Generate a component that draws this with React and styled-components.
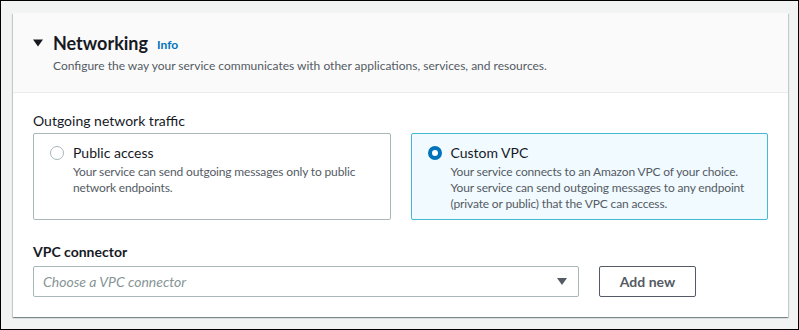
import React, { useState } from "react";
import styled, { createGlobalStyle } from "styled-components";

const GlobalStyle = createGlobalStyle`
    * { box-sizing: border-box; }
    body {
        margin: 0;
        font-family: Lato, "Liberation Sans", Arial, sans-serif;
        color: #16191f;
    }
`;

const options = [
    {
        id: "public",
        title: "Public access",
        description: "Your service can send outgoing messages only to public network endpoints.",
    },
    {
        id: "custom",
        title: "Custom VPC",
        description:
            "Your service connects to an Amazon VPC of your choice. Your service can send outgoing messages to any endpoint (private or public) that the VPC can access.",
    },
];

function App() {
    const [traffic, setTraffic] = useState("custom");

    return (
        <Page>
            <GlobalStyle />
            <Card>
                <Header>
                    <TitleRow>
                        <Caret viewBox="0 0 10 8" aria-hidden="true">
                            <path d="M0 0.5 L10 0.5 L5 7.5 Z" fill="#16191f" />
                        </Caret>
                        <Title>Networking</Title>
                        <InfoLink href="#">Info</InfoLink>
                    </TitleRow>
                    <Description>
                        Configure the way your service communicates with other applications, services, and resources.
                    </Description>
                </Header>
                <Body>
                    <FieldLabel>Outgoing network traffic</FieldLabel>
                    <Tiles>
                        {options.map((option) => {
                            const selected = traffic === option.id;
                            return (
                                <Tile key={option.id} $selected={selected} onClick={() => setTraffic(option.id)}>
                                    <Radio $checked={selected} />
                                    <TileText>
                                        <TileTitle>{option.title}</TileTitle>
                                        <TileDescription>{option.description}</TileDescription>
                                    </TileText>
                                </Tile>
                            );
                        })}
                    </Tiles>
                    <FieldLabel $strong>VPC connector</FieldLabel>
                    <ConnectorRow>
                        <Select>
                            <Placeholder>Choose a VPC connector</Placeholder>
                            <svg width="10" height="7" viewBox="0 0 10 7" aria-hidden="true">
                                <path d="M0 0 L10 0 L5 7 Z" fill="#545b64" />
                            </svg>
                        </Select>
                        <Button>Add new</Button>
                    </ConnectorRow>
                </Body>
            </Card>
        </Page>
    );
}

const Page = styled.div`
    width: 799px;
    height: 330px;
    border: 1px solid #000;
    background-color: #f2f3f3;
    padding: 12px 10px 0 12px;
`;

const Card = styled.div`
    background-color: #ffffff;
    box-shadow: 0 1px 1px 0 rgba(0, 28, 36, 0.3), 1px 1px 1px 0 rgba(0, 28, 36, 0.15),
        -1px 1px 1px 0 rgba(0, 28, 36, 0.15);
`;

const Header = styled.div`
    background-color: #fafafa;
    border-bottom: 1px solid #eaeded;
    padding: 18px 20px 17px 20px;
    height: 80px;
`;

const TitleRow = styled.div`
    display: flex;
    align-items: center;
    height: 24px;
`;

const Caret = styled.svg`
    width: 10px;
    height: 8px;
    margin-right: 10px;
`;

const Title = styled.h2`
    margin: 0;
    font-size: 18px;
    font-weight: 700;
    line-height: 24px;
    color: #16191f;
`;

const InfoLink = styled.a`
    margin-left: 9px;
    margin-top: 3px;
    font-size: 12px;
    font-weight: 700;
    color: #0073bb;
    text-decoration: none;
`;

const Description = styled.p`
    margin: 3px 0 0 20px;
    font-size: 12px;
    line-height: 16px;
    color: #545b64;
`;

const Body = styled.div`
    padding: 17px 20px 20px 20px;
`;

const FieldLabel = styled.div`
    font-size: 14px;
    line-height: 22px;
    font-weight: ${(p) => (p.$strong ? 700 : 400)};
    color: #16191f;
    margin-bottom: ${(p) => (p.$strong ? 3 : 1)}px;
`;

const Tiles = styled.div`
    display: grid;
    grid-template-columns: 1fr 1fr;
    gap: 20px;
    margin-bottom: 21px;
`;

const Tile = styled.div`
    display: flex;
    align-items: flex-start;
    gap: 9px;
    height: 87px;
    padding: 8px 10px 8px 16px;
    border: 1px solid ${(p) => (p.$selected ? "#44b9d6" : "#aab7b8")};
    border-radius: 2px;
    background-color: ${(p) => (p.$selected ? "#f1faff" : "#ffffff")};
    cursor: pointer;
`;

const Radio = styled.span`
    flex: none;
    width: 14px;
    height: 14px;
    margin-top: 4px;
    border-radius: 50%;
    background-color: #ffffff;
    border: ${(p) => (p.$checked ? "4px solid #0073bb" : "1px solid #aab7b8")};
`;

const TileText = styled.div`
    display: flex;
    flex-direction: column;
`;

const TileTitle = styled.span`
    font-size: 14px;
    line-height: 22px;
    color: #16191f;
`;

const TileDescription = styled.span`
    font-size: 12px;
    line-height: 16px;
    letter-spacing: -0.15px;
    color: #545b64;
`;

const ConnectorRow = styled.div`
    display: flex;
    gap: 20px;
`;

const Select = styled.div`
    width: 546px;
    height: 31px;
    display: flex;
    align-items: center;
    justify-content: space-between;
    padding: 0 11px 0 9px;
    border: 1px solid #aab7b8;
    border-radius: 2px;
    background-color: #ffffff;
`;

const Placeholder = styled.span`
    font-size: 14px;
    font-style: italic;
    color: #879596;
`;

const Button = styled.button`
    width: 97px;
    height: 31px;
    border: 1px solid #545b64;
    border-radius: 2px;
    background-color: #ffffff;
    font-family: inherit;
    font-size: 14px;
    font-weight: 700;
    color: #545b64;
    cursor: pointer;
`;

export default App;
